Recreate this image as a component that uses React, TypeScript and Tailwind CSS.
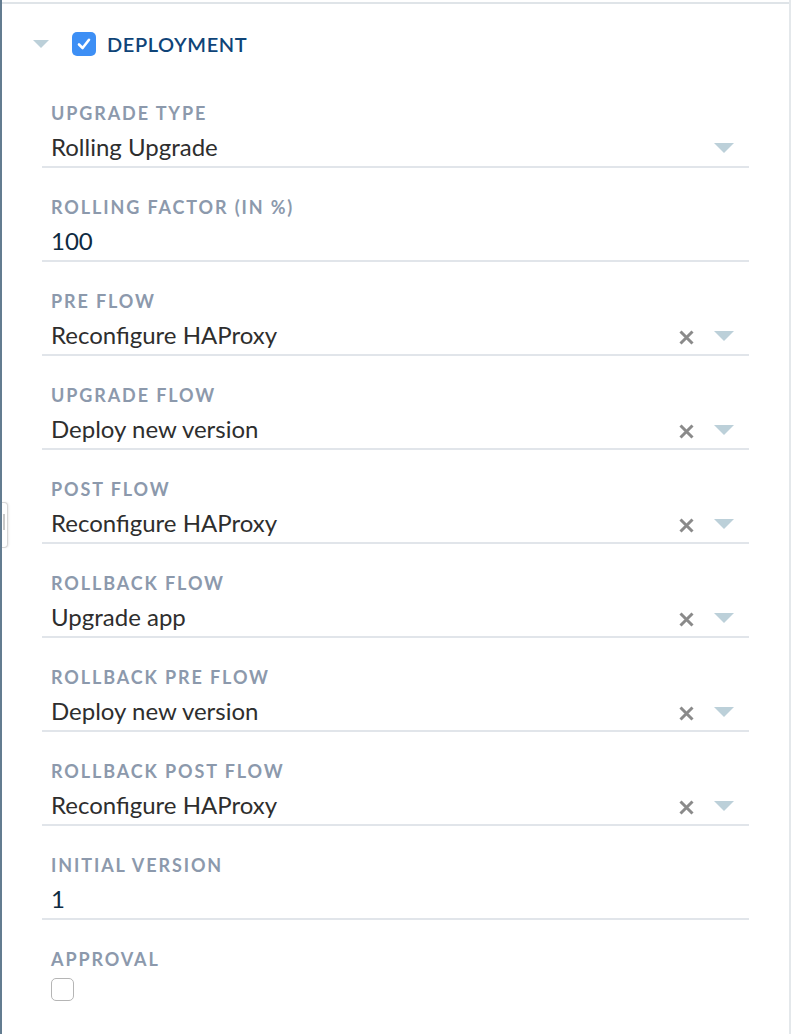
import React from "react";

type Field = { label: string; value: string; kind: "select" | "clear" | "input" };

const fields: Field[] = [
  { label: "UPGRADE TYPE", value: "Rolling Upgrade", kind: "select" },
  { label: "ROLLING FACTOR (IN %)", value: "100", kind: "input" },
  { label: "PRE FLOW", value: "Reconfigure HAProxy", kind: "clear" },
  { label: "UPGRADE FLOW", value: "Deploy new version", kind: "clear" },
  { label: "POST FLOW", value: "Reconfigure HAProxy", kind: "clear" },
  { label: "ROLLBACK FLOW", value: "Upgrade app", kind: "clear" },
  { label: "ROLLBACK PRE FLOW", value: "Deploy new version", kind: "clear" },
  { label: "ROLLBACK POST FLOW", value: "Reconfigure HAProxy", kind: "clear" },
  { label: "INITIAL VERSION", value: "1", kind: "input" },
];

const Caret = ({ w = 20, h = 10 }: { w?: number; h?: number }) => (
  <svg width={w} height={h} viewBox={`0 0 ${w} ${h}`}>
    <polygon points={`0,0 ${w},0 ${w / 2},${h}`} fill="#bcd0d9" />
  </svg>
);

const XIcon = () => (
  <svg width="15" height="15" viewBox="0 0 15 15">
    <path d="M1.5 1.5 L13.5 13.5 M13.5 1.5 L1.5 13.5" stroke="#8a8a8a" strokeWidth="3" strokeLinecap="butt" />
  </svg>
);

export default function App() {
  const font = { fontFamily: "Lato, 'Noto Sans', sans-serif" };
  return (
    <div className="relative w-[792px] h-[1034px] bg-white flex" style={font}>
      <div className="w-[2px] h-full bg-[#637c90]" />
      <div className="flex-1 h-full border-r-2 border-[#e4e8eb] mr-[1px] pt-[2px]">
        <div className="border-t-2 border-[#dfe4e8] h-full">
          <div className="h-[28px]" />
          <div className="flex items-center h-[24px]">
            <div className="ml-[31px]">
              <Caret w={16} h={8} />
            </div>
            <div className="ml-[23px] w-[24px] h-[24px] rounded-[5px] bg-[#3d8ff5] flex items-center justify-center">
              <svg width="18" height="18" viewBox="0 0 18 18">
                <path d="M4 9.5 L7.6 13 L14 4.8" stroke="#fff" strokeWidth="2.6" fill="none" strokeLinecap="round" strokeLinejoin="round" />
              </svg>
            </div>
            <div className="ml-[11px] text-[20px] leading-[24px] font-semibold tracking-[0.03em] text-[#0f4478]">
              DEPLOYMENT
            </div>
          </div>
          <div className="h-[18px]" />
          <div className="px-[40px]">
            {fields.map((f) => (
              <div key={f.label} className="pt-[29px]">
                <div className="pl-[9px] text-[18px] leading-[20px] font-bold tracking-[0.105em] text-[#8c99ac]">
                  {f.label}
                </div>
                <div className="mt-[10px] h-[33px] border-b-2 border-[#e1e5ea] box-content flex items-center pl-[9px] pr-[15px]">
                  <div
                    className={`flex-1 text-[24px] leading-[30px] -mt-[5px] ${
                      f.kind === "input" ? "text-[#0e2a42]" : "text-[#2e2e2e]"
                    }`}
                  >
                    {f.value}
                  </div>
                  {f.kind === "clear" && (
                    <div className="mr-[20px] -mt-[1px]">
                      <XIcon />
                    </div>
                  )}
                  {f.kind !== "input" && (
                    <div className="-mt-[4px]">
                      <Caret />
                    </div>
                  )}
                </div>
              </div>
            ))}
            <div className="pt-[29px]">
              <div className="pl-[9px] text-[18px] leading-[20px] font-bold tracking-[0.105em] text-[#8c99ac]">
                APPROVAL
              </div>
              <div className="ml-[9px] mt-[9px] w-[23px] h-[23px] rounded-[5px] border border-[#b5b5b5] bg-white" />
            </div>
          </div>
        </div>
      </div>
      <div className="absolute left-[2px] top-[502px] w-[6px] h-[46px] bg-white rounded-r-[4px] border border-l-0 border-[#d6d6d6] shadow-[1px_0_2px_rgba(0,0,0,0.08)]">
        <div className="absolute left-[1px] top-[11px] w-[2px] h-[16px] bg-[#c9c9c9]" />
      </div>
    </div>
  );
}
